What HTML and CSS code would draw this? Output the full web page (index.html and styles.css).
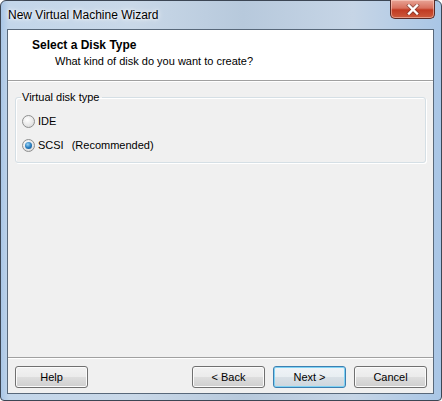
FILE: index.html
```html
<!DOCTYPE html>
<html>
<head>
<meta charset="utf-8">
<link rel="stylesheet" href="styles.css">
</head>
<body>
<div class="window">
  <div class="titlebar">
    <span class="title">New Virtual Machine Wizard</span>
    <div class="close">
      <svg width="14" height="11" viewBox="0 0 14 11"><path d="M3 1.5 L11 9.5 M11 1.5 L3 9.5" stroke="#5a2a26" stroke-width="4" stroke-linecap="square" opacity="0.5"/><path d="M3 1.5 L11 9.5 M11 1.5 L3 9.5" stroke="#fff" stroke-width="2.4" stroke-linecap="square"/></svg>
    </div>
  </div>
  <div class="client">
    <div class="header">
      <div class="h-title">Select a Disk Type</div>
      <div class="h-sub">What kind of disk do you want to create?</div>
    </div>
    <div class="sep"></div>
    <div class="content">
      <fieldset class="group">
        <legend>Virtual disk type</legend>
        <div class="opt"><span class="radio"></span><span>IDE</span></div>
        <div class="opt"><span class="radio checked"></span><span>SCSI</span><span class="rec">(Recommended)</span></div>
      </fieldset>
    </div>
    <div class="sep"></div>
    <div class="buttons">
      <button class="btn">Help</button>
      <div class="spacer"></div>
      <button class="btn">&lt; Back</button>
      <button class="btn focus">Next &gt;</button>
      <button class="btn">Cancel</button>
    </div>
  </div>
</div>
</body>
</html>
```
FILE: styles.css
```css
html, body {
  margin: 0;
  padding: 0;
  background: #ffffff;
}
.window {
  box-sizing: border-box;
  width: 442px;
  height: 401px;
  border: 1px solid #3c4654;
  border-radius: 6px 6px 4px 4px;
  background: linear-gradient(90deg, #a9c6e6 0px, #c3d6ea 8px, #c9d8e8 30%, #b7c9dc 55%, #c6d5e6 80%, #a9c6e6 100%);
  display: flex;
  flex-direction: column;
  padding: 0 7px 6px 6px;
  font-family: "Liberation Sans", Arial, sans-serif;
}
.titlebar {
  height: 28px;
  display: flex;
  align-items: flex-start;
  position: relative;
}
.title {
  font-size: 12px;
  color: #000;
  margin: 7px 0 0 1px;
  text-shadow: 0 0 6px #ffffff, 0 0 3px #ffffff;
}
.close {
  position: absolute;
  right: -1px;
  top: -1px;
  width: 45px;
  height: 19px;
  box-sizing: border-box;
  border: 1px solid #5a2a26;
  border-top: none;
  border-radius: 0 0 5px 5px;
  background: linear-gradient(#e8a496 0%, #d8705e 45%, #c13a22 55%, #cc5a3c 100%);
  box-shadow: inset 0 0 0 1px rgba(255, 220, 210, 0.5);
  display: flex;
  align-items: center;
  justify-content: center;
}
.client {
  flex: 1;
  border: 1px solid #58687a;
  background: #f0f0f0;
  display: flex;
  flex-direction: column;
}
.header {
  background: #ffffff;
  height: 50px;
  box-sizing: border-box;
  padding: 8px 0 0 24px;
}
.h-title {
  font-size: 12px;
  font-weight: bold;
  color: #000;
}
.h-sub {
  font-size: 11px;
  color: #000;
  margin: 3px 0 0 23px;
}
.sep {
  height: 1px;
  background: #a0a0a0;
  border-bottom: 1px solid #ffffff;
}
.content {
  flex: 1;
  padding: 9px 7px 0 7px;
}
.group {
  margin: 0;
  border: 1px solid #d5dfe5;
  border-radius: 3px;
  box-shadow: inset 1px 1px 0 #ffffff, 1px 1px 0 #ffffff;
  padding: 6px 6px 5px 6px;
}
.group legend {
  font-size: 11px;
  color: #000;
  padding: 0 3px 0 1px;
  margin-left: -1px;
}
.opt {
  display: flex;
  align-items: center;
  font-size: 11px;
  color: #000;
  height: 24px;
}
.rec {
  margin-left: 8px;
}
.radio {
  width: 11px;
  height: 11px;
  border-radius: 50%;
  border: 1px solid #8e8f8f;
  background: radial-gradient(circle at 40% 35%, #ffffff 0%, #e8e8e8 55%, #cfcfcf 100%);
  margin-right: 3px;
  position: relative;
  flex: none;
}
.radio.checked::after {
  content: "";
  position: absolute;
  left: 2px;
  top: 2px;
  width: 7px;
  height: 7px;
  border-radius: 50%;
  background: radial-gradient(circle at 40% 35%, #9ed5f5 0%, #2a7fc0 50%, #0e4a86 100%);
}
.buttons {
  display: flex;
  padding: 7px 6px 5px 7px;
  gap: 8px;
}
.spacer {
  flex: 1;
}
.btn {
  width: 73px;
  height: 22px;
  box-sizing: border-box;
  border: 1px solid #707070;
  border-radius: 3px;
  background: linear-gradient(#f2f2f2 0%, #ebebeb 48%, #dddddd 52%, #cfcfcf 100%);
  box-shadow: inset 0 0 0 1px #fbfbfb;
  font-family: "Liberation Sans", Arial, sans-serif;
  font-size: 11px;
  color: #000;
  padding: 0;
}
.btn.focus {
  border-color: #3c7fb1;
  box-shadow: inset 0 0 0 1px #7fd2f4;
  background: linear-gradient(#f0f4f7 0%, #e8eef2 48%, #d8e0e6 52%, #cdd6dd 100%);
}
```
